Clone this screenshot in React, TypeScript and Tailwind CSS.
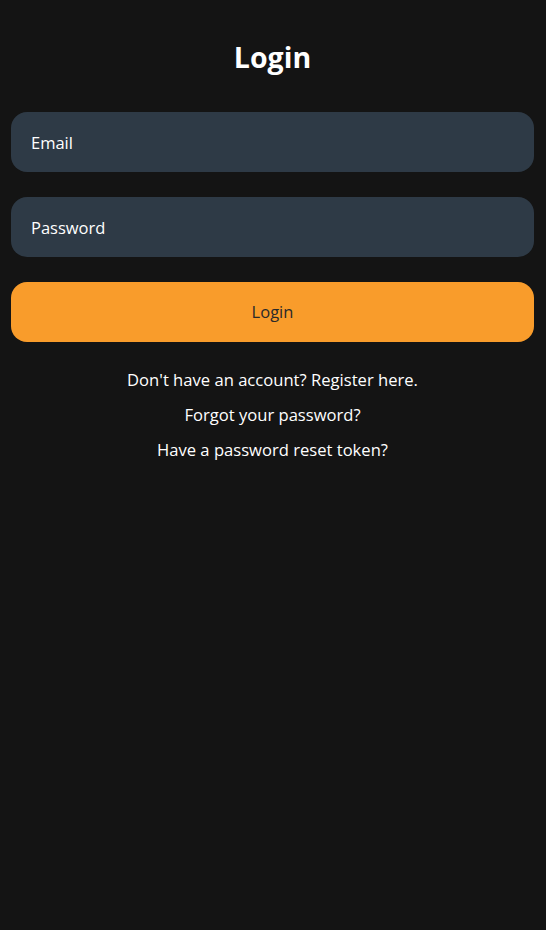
export default function App() {
  return (
    <div className="min-h-[930px] bg-[#141414] pl-[11px] pr-[12px] pt-[38px] font-['Open_Sans','Noto_Sans',sans-serif] text-white">
      <h1 className="text-center text-[28.5px] font-bold leading-[38px]">Login</h1>

      <form className="mt-[36px] flex flex-col gap-[25px]" onSubmit={(event) => event.preventDefault()}>
        <input
          type="email"
          placeholder="Email"
          className="h-[60px] w-full rounded-[16px] bg-[#2e3a46] px-5 pt-[1px] text-[16.5px] text-white outline-none placeholder:text-white"
        />
        <input
          type="password"
          placeholder="Password"
          className="h-[60px] w-full rounded-[16px] bg-[#2e3a46] px-5 pt-[1px] text-[16.5px] text-white outline-none placeholder:text-white"
        />
        <button
          type="submit"
          className="h-[60px] w-full rounded-[16px] bg-[#f99c2b] pt-[1px] text-[16.5px] text-[#2a2a2a]"
        >
          Login
        </button>
      </form>

      <div className="mt-[26px] flex flex-col items-center gap-[11px] text-[16.6px] leading-[24px]">
        <a href="#">Don&apos;t have an account? Register here.</a>
        <a href="#">Forgot your password?</a>
        <a href="#">Have a password reset token?</a>
      </div>
    </div>
  );
}
